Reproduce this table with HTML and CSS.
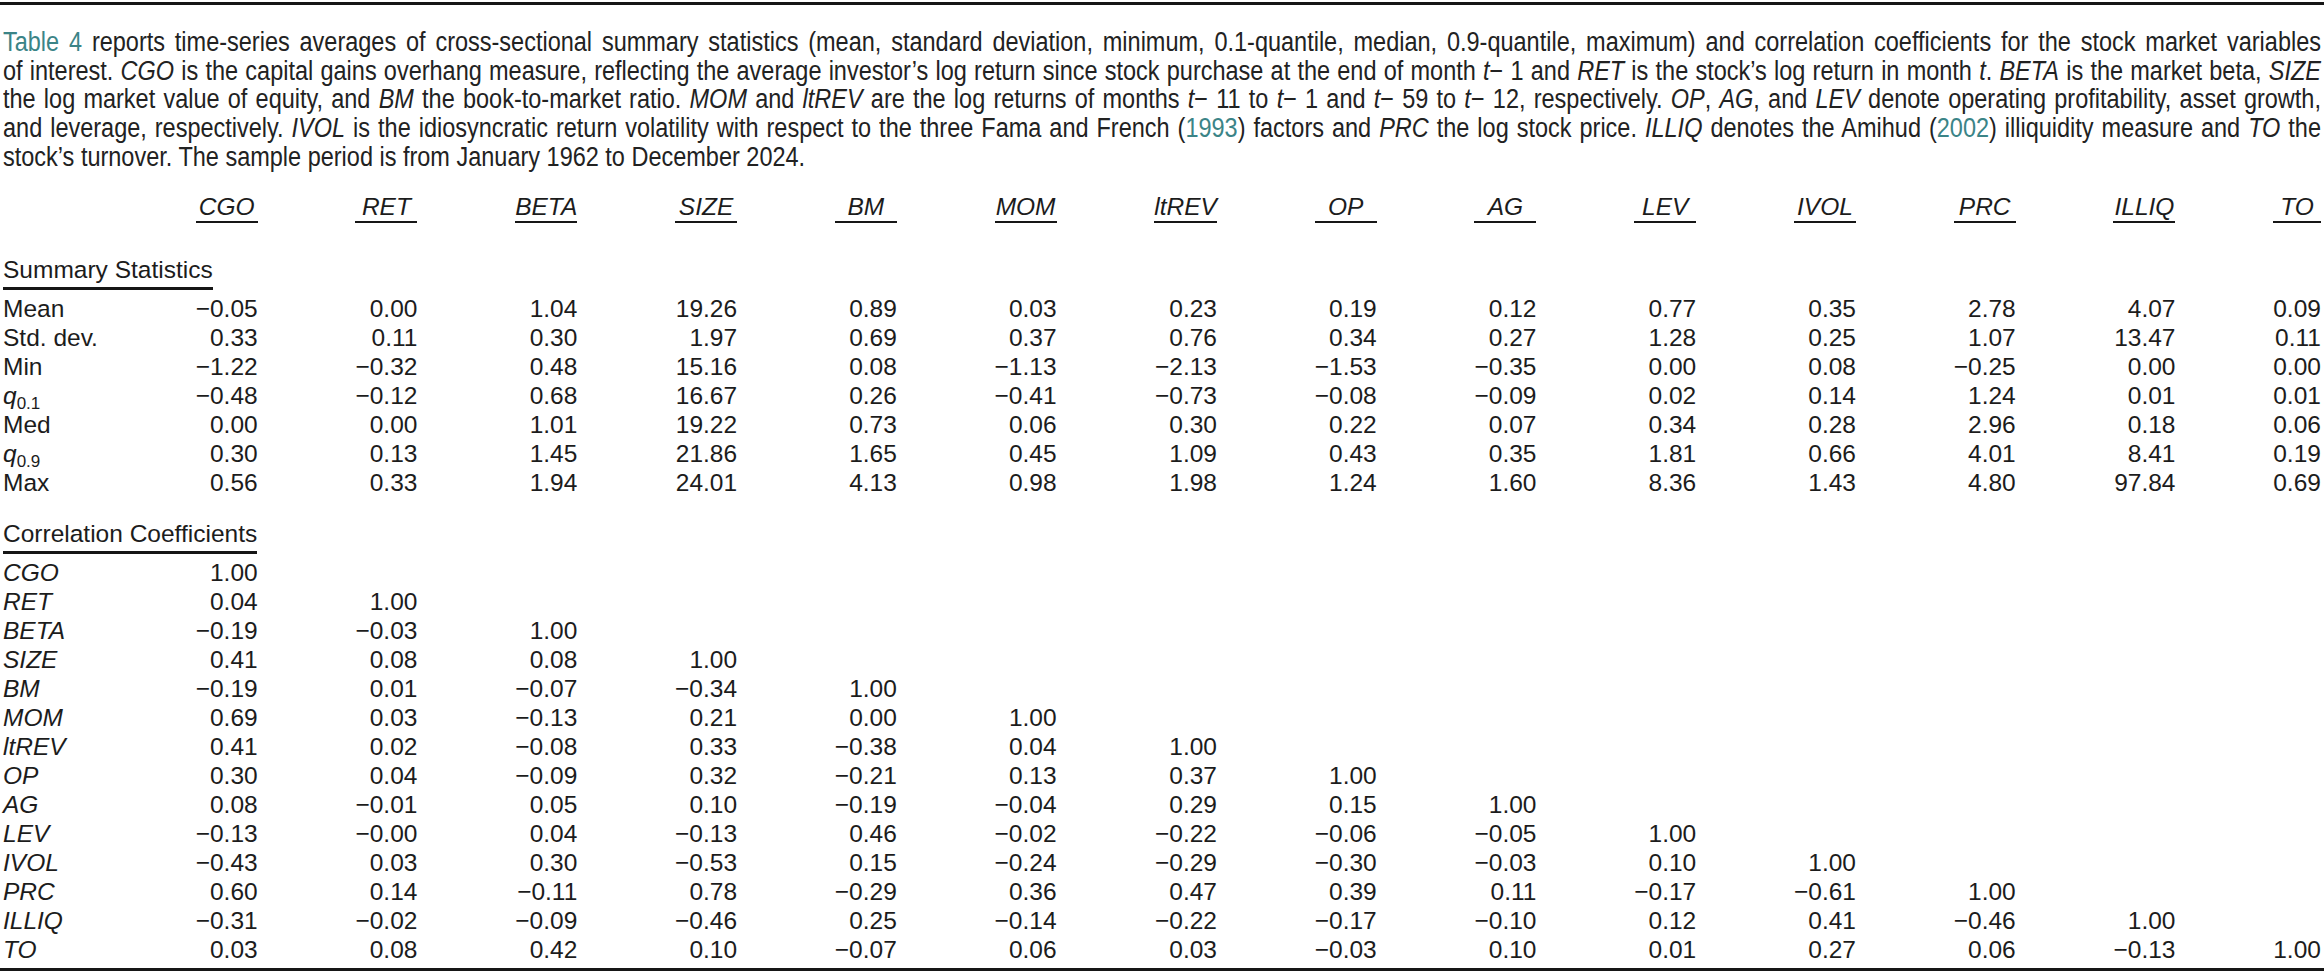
FILE: index.html
```html
<!DOCTYPE html>
<html lang="en">
<head>
<meta charset="utf-8">
<title>Summary statistics</title>
<link rel="stylesheet" href="styles.css">
</head>
<body>
<div class="page">
  <p class="intro">
    <span class="ln"><span class="ref">Table 4</span> reports time-series averages of cross-sectional summary statistics (mean, standard deviation, minimum, 0.1-quantile, median, 0.9-quantile, maximum) and correlation coefficients for the stock market variables</span>
    <span class="ln">of interest. <i>CGO</i> is the capital gains overhang measure, reflecting the average investor’s log return since stock purchase at the end of month <i>t</i>− 1 and <i>RET</i> is the stock’s log return in month <i>t</i>. <i>BETA</i> is the market beta, <i>SIZE</i></span>
    <span class="ln">the log market value of equity, and <i>BM</i> the book-to-market ratio. <i>MOM</i> and <i>ltREV</i> are the log returns of months <i>t</i>− 11 to <i>t</i>− 1 and <i>t</i>− 59 to <i>t</i>− 12, respectively. <i>OP</i>, <i>AG</i>, and <i>LEV</i> denote operating profitability, asset growth,</span>
    <span class="ln">and leverage, respectively. <i>IVOL</i> is the idiosyncratic return volatility with respect to the three Fama and French (<span class="ref">1993</span>) factors and <i>PRC</i> the log stock price. <i>ILLIQ</i> denotes the Amihud (<span class="ref">2002</span>) illiquidity measure and <i>TO</i> the</span>
    <span class="ln last">stock’s turnover. The sample period is from January 1962 to December 2024.</span>
  </p>

  <div class="tbl">
    <div class="lab head"></div>
    <div class="num head"><span class="hd">CGO</span></div>
    <div class="num head"><span class="hd">RET</span></div>
    <div class="num head"><span class="hd">BETA</span></div>
    <div class="num head"><span class="hd">SIZE</span></div>
    <div class="num head"><span class="hd">BM</span></div>
    <div class="num head"><span class="hd">MOM</span></div>
    <div class="num head"><span class="hd">ltREV</span></div>
    <div class="num head"><span class="hd">OP</span></div>
    <div class="num head"><span class="hd">AG</span></div>
    <div class="num head"><span class="hd">LEV</span></div>
    <div class="num head"><span class="hd">IVOL</span></div>
    <div class="num head"><span class="hd">PRC</span></div>
    <div class="num head"><span class="hd">ILLIQ</span></div>
    <div class="num head"><span class="hd">TO</span></div>

    <div class="sub sub-first"><span>Summary Statistics</span></div>

    <div class="lab">Mean</div><div class="num">−0.05</div><div class="num">0.00</div><div class="num">1.04</div><div class="num">19.26</div><div class="num">0.89</div><div class="num">0.03</div><div class="num">0.23</div><div class="num">0.19</div><div class="num">0.12</div><div class="num">0.77</div><div class="num">0.35</div><div class="num">2.78</div><div class="num">4.07</div><div class="num">0.09</div>
    <div class="lab">Std. dev.</div><div class="num">0.33</div><div class="num">0.11</div><div class="num">0.30</div><div class="num">1.97</div><div class="num">0.69</div><div class="num">0.37</div><div class="num">0.76</div><div class="num">0.34</div><div class="num">0.27</div><div class="num">1.28</div><div class="num">0.25</div><div class="num">1.07</div><div class="num">13.47</div><div class="num">0.11</div>
    <div class="lab">Min</div><div class="num">−1.22</div><div class="num">−0.32</div><div class="num">0.48</div><div class="num">15.16</div><div class="num">0.08</div><div class="num">−1.13</div><div class="num">−2.13</div><div class="num">−1.53</div><div class="num">−0.35</div><div class="num">0.00</div><div class="num">0.08</div><div class="num">−0.25</div><div class="num">0.00</div><div class="num">0.00</div>
    <div class="lab"><i>q</i><sub>0.1</sub></div><div class="num">−0.48</div><div class="num">−0.12</div><div class="num">0.68</div><div class="num">16.67</div><div class="num">0.26</div><div class="num">−0.41</div><div class="num">−0.73</div><div class="num">−0.08</div><div class="num">−0.09</div><div class="num">0.02</div><div class="num">0.14</div><div class="num">1.24</div><div class="num">0.01</div><div class="num">0.01</div>
    <div class="lab">Med</div><div class="num">0.00</div><div class="num">0.00</div><div class="num">1.01</div><div class="num">19.22</div><div class="num">0.73</div><div class="num">0.06</div><div class="num">0.30</div><div class="num">0.22</div><div class="num">0.07</div><div class="num">0.34</div><div class="num">0.28</div><div class="num">2.96</div><div class="num">0.18</div><div class="num">0.06</div>
    <div class="lab"><i>q</i><sub>0.9</sub></div><div class="num">0.30</div><div class="num">0.13</div><div class="num">1.45</div><div class="num">21.86</div><div class="num">1.65</div><div class="num">0.45</div><div class="num">1.09</div><div class="num">0.43</div><div class="num">0.35</div><div class="num">1.81</div><div class="num">0.66</div><div class="num">4.01</div><div class="num">8.41</div><div class="num">0.19</div>
    <div class="lab">Max</div><div class="num">0.56</div><div class="num">0.33</div><div class="num">1.94</div><div class="num">24.01</div><div class="num">4.13</div><div class="num">0.98</div><div class="num">1.98</div><div class="num">1.24</div><div class="num">1.60</div><div class="num">8.36</div><div class="num">1.43</div><div class="num">4.80</div><div class="num">97.84</div><div class="num">0.69</div>

    <div class="sub sub-second"><span>Correlation Coefficients</span></div>

    <div class="lab"><i>CGO</i></div><div class="num">1.00</div>
    <div class="lab"><i>RET</i></div><div class="num">0.04</div><div class="num">1.00</div>
    <div class="lab"><i>BETA</i></div><div class="num">−0.19</div><div class="num">−0.03</div><div class="num">1.00</div>
    <div class="lab"><i>SIZE</i></div><div class="num">0.41</div><div class="num">0.08</div><div class="num">0.08</div><div class="num">1.00</div>
    <div class="lab"><i>BM</i></div><div class="num">−0.19</div><div class="num">0.01</div><div class="num">−0.07</div><div class="num">−0.34</div><div class="num">1.00</div>
    <div class="lab"><i>MOM</i></div><div class="num">0.69</div><div class="num">0.03</div><div class="num">−0.13</div><div class="num">0.21</div><div class="num">0.00</div><div class="num">1.00</div>
    <div class="lab"><i>ltREV</i></div><div class="num">0.41</div><div class="num">0.02</div><div class="num">−0.08</div><div class="num">0.33</div><div class="num">−0.38</div><div class="num">0.04</div><div class="num">1.00</div>
    <div class="lab"><i>OP</i></div><div class="num">0.30</div><div class="num">0.04</div><div class="num">−0.09</div><div class="num">0.32</div><div class="num">−0.21</div><div class="num">0.13</div><div class="num">0.37</div><div class="num">1.00</div>
    <div class="lab"><i>AG</i></div><div class="num">0.08</div><div class="num">−0.01</div><div class="num">0.05</div><div class="num">0.10</div><div class="num">−0.19</div><div class="num">−0.04</div><div class="num">0.29</div><div class="num">0.15</div><div class="num">1.00</div>
    <div class="lab"><i>LEV</i></div><div class="num">−0.13</div><div class="num">−0.00</div><div class="num">0.04</div><div class="num">−0.13</div><div class="num">0.46</div><div class="num">−0.02</div><div class="num">−0.22</div><div class="num">−0.06</div><div class="num">−0.05</div><div class="num">1.00</div>
    <div class="lab"><i>IVOL</i></div><div class="num">−0.43</div><div class="num">0.03</div><div class="num">0.30</div><div class="num">−0.53</div><div class="num">0.15</div><div class="num">−0.24</div><div class="num">−0.29</div><div class="num">−0.30</div><div class="num">−0.03</div><div class="num">0.10</div><div class="num">1.00</div>
    <div class="lab"><i>PRC</i></div><div class="num">0.60</div><div class="num">0.14</div><div class="num">−0.11</div><div class="num">0.78</div><div class="num">−0.29</div><div class="num">0.36</div><div class="num">0.47</div><div class="num">0.39</div><div class="num">0.11</div><div class="num">−0.17</div><div class="num">−0.61</div><div class="num">1.00</div>
    <div class="lab"><i>ILLIQ</i></div><div class="num">−0.31</div><div class="num">−0.02</div><div class="num">−0.09</div><div class="num">−0.46</div><div class="num">0.25</div><div class="num">−0.14</div><div class="num">−0.22</div><div class="num">−0.17</div><div class="num">−0.10</div><div class="num">0.12</div><div class="num">0.41</div><div class="num">−0.46</div><div class="num">1.00</div>
    <div class="lab"><i>TO</i></div><div class="num">0.03</div><div class="num">0.08</div><div class="num">0.42</div><div class="num">0.10</div><div class="num">−0.07</div><div class="num">0.06</div><div class="num">0.03</div><div class="num">−0.03</div><div class="num">0.10</div><div class="num">0.01</div><div class="num">0.27</div><div class="num">0.06</div><div class="num">−0.13</div><div class="num">1.00</div>
  </div>
</div>
</body>
</html>
```

FILE: styles.css
```css
html, body {
  margin: 0;
  padding: 0;
  background: #ffffff;
  overflow-x: hidden;
}

.page {
  margin-top: 2px;
  padding: 0 3px;
  border-top: 3px solid #161616;
  border-bottom: 3px solid #161616;
  color: #1c1c1c;
  font-family: "Liberation Sans", Arial, sans-serif;
}

/* ---------- intro paragraph (condensed face) ---------- */
.intro {
  margin: 23px 0 0;
  width: calc(100% / 0.87);
  transform: scaleX(0.87);
  transform-origin: left top;
  font-size: 27px;
  line-height: 28.7px;
  color: #222222;
}

.intro .ln {
  display: block;
  text-align: justify;
  text-align-last: justify;
}

.intro .ln.last {
  text-align-last: left;
}

.intro .ref {
  color: #3b8487;
}

/* ---------- table ---------- */
.tbl {
  display: grid;
  grid-template-columns: repeat(15, max-content);
  justify-content: space-between;
  margin-top: 20px;
  margin-bottom: 4px;
  font-size: 24.5px;
  line-height: 29px;
}

.lab {
  grid-column: 1;
  text-align: left;
  white-space: nowrap;
}

.num {
  text-align: right;
  white-space: nowrap;
}

.head {
  padding-bottom: 2px;
}

.hd {
  display: block;
  font-style: italic;
  text-align: center;
  border-bottom: 2px solid #161616;
}

.lab i {
  font-style: italic;
}

.lab sub {
  font-size: 17px;
  line-height: 0;
  vertical-align: -5px;
}

.sub {
  grid-column: 1 / -1;
  justify-self: start;
  white-space: nowrap;
}

.sub span {
  display: inline-block;
  padding-bottom: 3px;
  border-bottom: 3px solid #161616;
}

.sub-first {
  margin-top: 30px;
  margin-bottom: 4px;
}

.sub-second {
  margin-top: 22px;
  margin-bottom: 4px;
}
```
